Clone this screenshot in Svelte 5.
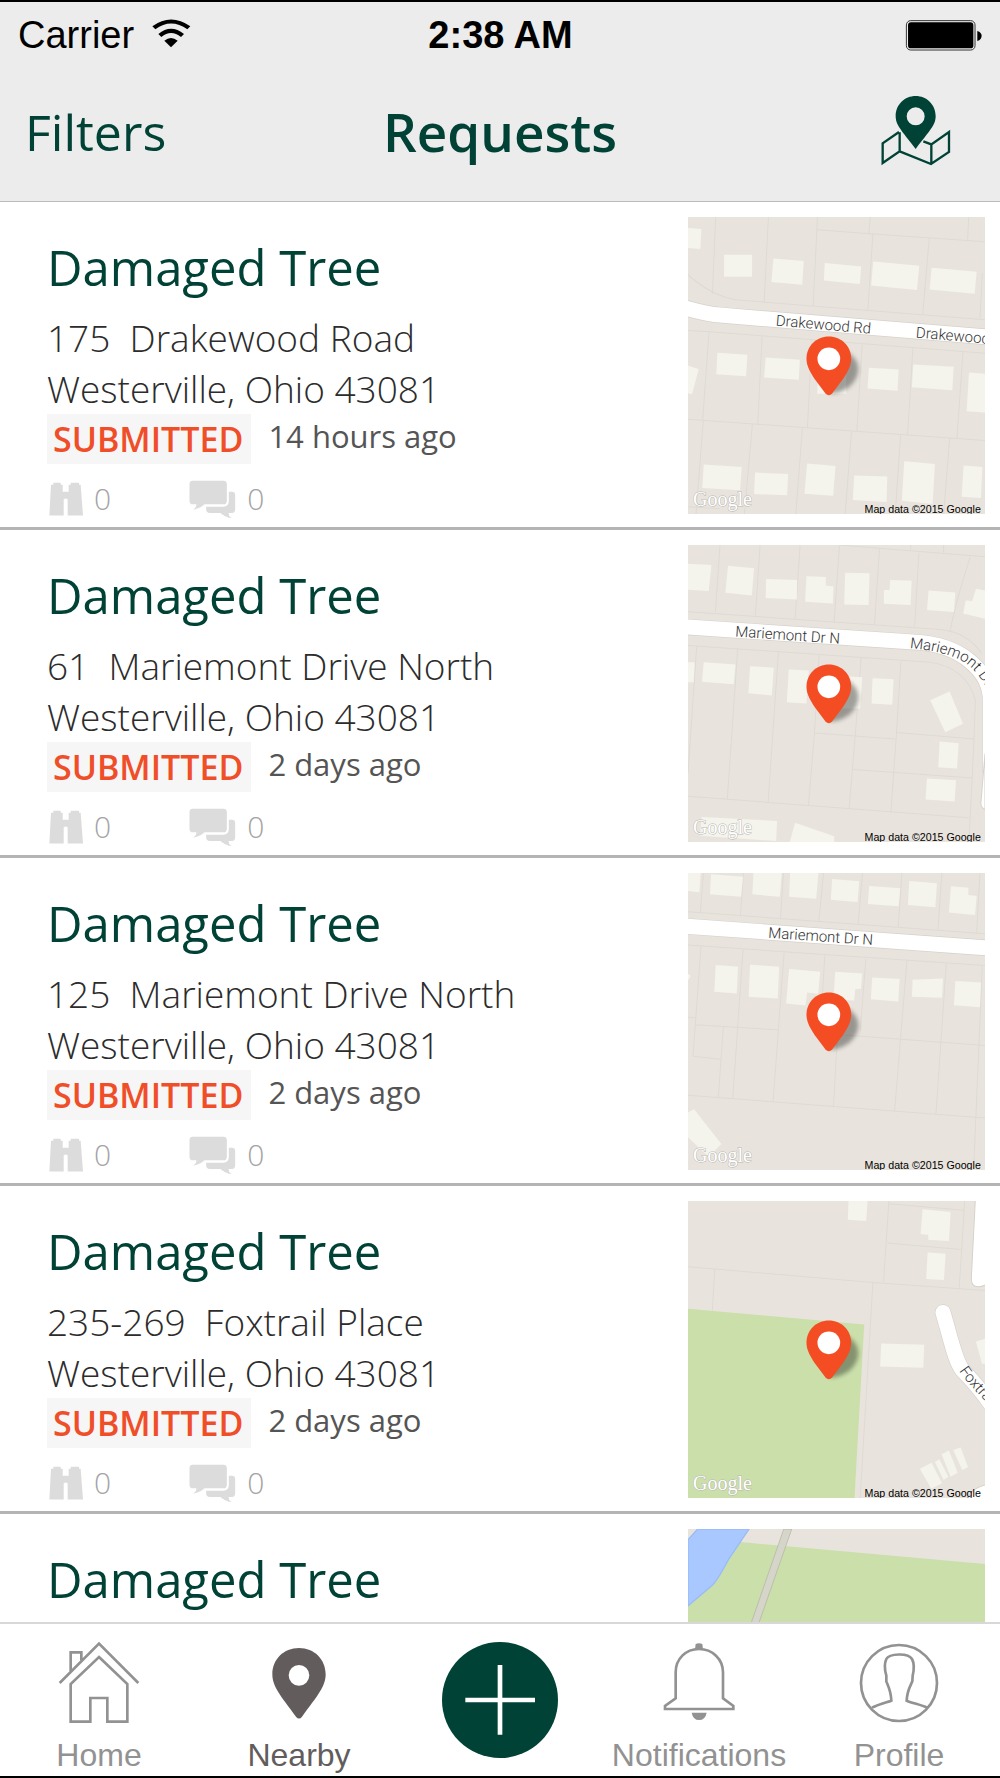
<script>
  const requests = [
    { street: '175\u00a0 Drakewood Road', city: 'Westerville, Ohio 43081', age: '14 hours ago', map: 'drakewood' },
    { street: '61\u00a0 Mariemont Drive North', city: 'Westerville, Ohio 43081', age: '2 days ago', map: 'mariemontEast' },
    { street: '125\u00a0 Mariemont Drive North', city: 'Westerville, Ohio 43081', age: '2 days ago', map: 'mariemontWest' },
    { street: '235-269\u00a0 Foxtrail Place', city: 'Westerville, Ohio 43081', age: '2 days ago', map: 'foxtrail' },
    { map: 'river' }
  ];
</script>

{#snippet drakewood()}
  <g transform="translate(-24 -22)">
    <path class="lot" d="M107 22L97 253M265 22L252 280M412 22L399 290M412 60L570 72L914 96M570 22L566 72L578 74L563 303M865 22L862 92M747 86L727 316M906 190L899 325M24 195Q90 255 165 270L914 330M24 362L90 366L914 430M87 366L68 630M246 380L233 642M395 390L382 653M546 402L530 663M698 414L682 675M848 426L830 686M24 628L914 692M70 630L48 912M217 643L193 912M367 653L347 912M514 664L495 912M661 675L645 912M808 686L790 912M24 890L120 896" />
    <path class="house" d="M24 55L64 58L61 118L24 115ZM132 135H216V201H132ZM280 146L371 154L366 225L274 217ZM434 160L543 170L539 223L431 212ZM579 155L717 168L710 241L573 227ZM754 174L889 186L883 252L748 239ZM112 429L202 435L198 499L109 493ZM257 443L359 450L356 510L252 503ZM414 490H498V552H411ZM566 474L655 479L652 543L562 536ZM699 464L820 471L816 541L695 532ZM866 488L914 492V608L859 604ZM24 467L56 478L36 553L24 550ZM71 764L185 771L180 841L67 834ZM225 788L324 792L321 856L222 852ZM381 761L466 768L459 857L373 851ZM522 797L621 800L619 876L518 870ZM672 754L764 762L757 882L665 872ZM850 767L906 771L902 864L844 860Z" />
    <path class="curb" d="M10 293Q85 314 120 316L930 382" />
    <path class="road" d="M10 293Q85 314 120 316L930 382" />
    <text class="street" x="286" y="347" transform="rotate(5 286 347)">Drakewood Rd</text>
    <text class="street" x="706" y="383" transform="rotate(5 706 383)">Drakewood Rd</text>
  </g>
{/snippet}

{#snippet mariemontEast()}
  <g transform="translate(-24 -15)">
    <path class="lot" d="M120 15L106 217M240 15L226 226M360 15L345 236M478 15L462 245M598 25L583 252M716 38L703 260M870 50Q825 190 809 275M476 15L914 50M691 15V28M790 15V38M24 215L780 268Q860 276 905 340M24 316L750 366Q860 385 885 480L880 620L866 905M50 318L24 700M173 325L142 775M295 335L264 786M417 345L403 578L385 795M543 350L525 588L507 802M662 365L648 590L632 815M403 578L644 596M648 577L882 596M520 688L876 713M24 768L866 832" />
    <path class="house" d="M24 71L94 75L86 153L24 149ZM144 77L222 85L215 166L136 158ZM258 117L351 120L350 178L257 174ZM379 109L437 111V136L460 139L458 190L375 185ZM495 98L568 100L565 195L492 193ZM630 120L694 122L691 195L611 191V150H628ZM745 151L825 157L821 216L740 210ZM887 146L914 151V236L849 220L856 181L876 183ZM24 366H44L41 426H24ZM71 366L166 373L161 432L66 425ZM210 378L281 383L275 466L205 459ZM326 388L386 391L379 490L320 486ZM490 408L546 411L540 505H480ZM577 414L640 417L636 494L574 490ZM750 480L808 454L848 551L795 576ZM778 604L835 609L830 685L774 681ZM740 715L827 720L823 784L736 778ZM65 830L291 842L288 902L60 886ZM345 847L462 888V905H329Z" />
    <path class="curb" d="M10 260L700 306C850 312 930 400 930 480V690" />
    <path class="road" d="M10 260L700 306C850 312 930 400 930 480V690" />
    <path class="road-edge" d="M914 640L902 785Q900 802 914 808Z" />
    <text class="street" x="165" y="289" transform="rotate(4 165 289)">Mariemont Dr N</text>
    <path id="mariemont-bend" d="M688 324C770 332 825 345 865 376C895 400 920 440 935 480" fill="none" />
    <text class="street"><textPath href="#mariemont-bend">Mariemont Dr</textPath></text>
  </g>
{/snippet}

{#snippet mariemontWest()}
  <g transform="translate(-24 -26)">
    <path class="lot" d="M70 26L61 145M190 26L181 155M310 26L301 163M430 26L416 172M547 26L534 178M665 26L654 187M785 26L773 195M899 26L889 205M24 142L914 208M24 242L914 303M63 245L39 575M189 255L158 702M312 264L279 710M434 272L425 420M557 284L540 500M680 290L643 740M798 298L767 748M906 303L880 914M24 458L47 459M47 481L292 496M130 486L115 697M40 575L122 584M472 510L914 543M472 510L460 724M24 692L914 760" />
    <path class="house" d="M24 26H62L58 84L24 80ZM93 30L189 37L183 97L90 90ZM220 26H305L299 97L217 90ZM330 26H415L408 103L327 97ZM456 44L537 51L532 113L452 106ZM567 65L660 72L655 126L563 119ZM687 50L770 57L765 129L683 122ZM812 66L864 70V92L889 95L884 152L806 144ZM107 302L174 307L170 387L103 382ZM210 301L297 307L293 402L206 397ZM327 314L420 322L414 388L381 384L376 423L318 417ZM465 322L546 327L542 373L525 374L522 408L460 405ZM576 339L658 344L654 411L572 404ZM697 346L788 342L785 400L695 397ZM825 350L902 354L899 428L821 422ZM24 328L32 335L24 348ZM42 734L124 838L86 876L24 818V744Z" />
    <path class="curb" d="M10 185L930 251" />
    <path class="road" d="M10 185L930 251" />
    <text class="street" x="264" y="220" transform="rotate(4 264 220)">Mariemont Dr N</text>
  </g>
{/snippet}

{#snippet foxtrail()}
  <g transform="translate(-24 -34)">
    <path class="lot" d="M24 231L578 278L914 302M104 239L97 362M626 34L610 276M626 42L850 62M622 160L842 179M853 34L837 294M578 278L540 924" />
    <path class="park" d="M24 357L552 404L523 924H24Z" />
    <path class="house" d="M505 34H562L558 94L503 90ZM727 59L811 67L806 154L744 150V135L721 133ZM742 188L796 192L791 271L738 268ZM603 461L732 465L729 534L600 530ZM887 455L914 447V522H905ZM719 836L754 818L785 880L753 896ZM764 816L777 808L804 860L790 870ZM784 793L806 782L832 848L811 860ZM819 780L841 773L863 831L846 840Z" />
    <path class="road-edge" d="M885 30L873 265Q872 291 894 291Q906 291 918 284V30Z" />
    <path class="road-edge" d="M918 884Q890 890 875 905L860 928H918Z" />
    <path class="curb" d="M788 368C810 440 825 520 850 545C880 575 905 605 940 655" />
    <path class="road" d="M788 368C810 440 825 520 850 545C880 575 905 605 940 655" />
    <path id="foxtrail-bend" d="M836 543C860 580 890 603 945 670" fill="none" />
    <text class="street"><textPath href="#foxtrail-bend">Foxtrail Pl</textPath></text>
  </g>
{/snippet}

{#snippet river()}
  <g transform="translate(-84 -120)">
    <path class="park" d="M84 150L250 160L974 225V1010H84Z" />
    <path class="water" d="M113 120H267L205 212Q170 278 155 290L84 350V152Z" />
    <path class="track" d="M371 120H395L290 420H267Z" />
  </g>
{/snippet}

{#snippet tile(name)}
  <svg class="map" viewBox="0 0 890 890" role="img" aria-label="Map of the request location">
    <rect class="land" width="890" height="890" />
    {#if name === 'drakewood'}{@render drakewood()}
    {:else if name === 'mariemontEast'}{@render mariemontEast()}
    {:else if name === 'mariemontWest'}{@render mariemontWest()}
    {:else if name === 'foxtrail'}{@render foxtrail()}
    {:else}{@render river()}{/if}
    {#if name !== 'river'}
      <path class="shadow" d="M470 402C512 420 518 458 502 486C488 510 466 524 428 530L422 520Z" />
      <path class="pin" d="M422 358C460 358 489 388 489 424C489 448 476 468 464 486L432 529Q422 540 412 529L380 486C368 468 355 448 355 424C355 388 384 358 422 358Z" />
      <circle class="pin-hole" cx="422" cy="425" r="34" />
      <text class="google" x="15" y="866">Google</text>
      <text class="credit" x="529" y="886">Map data ©2015 Google</text>
    {/if}
  </svg>
{/snippet}

<div class="screen">
  <header>
    <div class="status">
      <div class="carrier">
        <span>Carrier</span>
        <svg class="wifi" viewBox="457 50 120 90" aria-hidden="true">
          <path d="M461 75Q517 34 575 75L566 84Q517 49 470 84Z" />
          <path d="M479 98Q517 66 556 98L547 107Q517 83 488 107Z" />
          <path d="M497 118Q517 102 537 118L517 138Z" />
        </svg>
      </div>
      <span class="clock">2:38 AM</span>
      <svg class="battery" viewBox="1216 50 234 100" aria-hidden="true">
        <rect x="1219" y="55" width="208" height="89" rx="13" fill="none" stroke="#333" stroke-width="3" />
        <rect x="1224" y="60" width="198" height="79" rx="9" />
        <path d="M1434 86Q1447 90 1447 101Q1447 113 1434 117Z" />
      </svg>
    </div>
    <div class="bar">
      <button class="filters">Filters</button>
      <h1>Requests</h1>
      <button class="map-toggle" aria-label="Show map">
        <svg viewBox="1143 282 210 213" aria-hidden="true">
          <path fill="none" stroke="currentColor" stroke-width="7" d="M1197 393L1148 427V486L1199 451L1293 489L1347 453V393L1294 430L1270 421M1199 394V451M1294 430V489" />
          <path fill="#ececec" d="M1187 346C1181 360 1206 395 1247 451L1264 428L1215 370Z" />
          <path fill="currentColor" fill-rule="evenodd" d="M1247 285C1280 285 1307 311 1307 345C1307 373 1290 387 1247 444C1204 387 1187 373 1187 345C1187 311 1214 285 1247 285ZM1247 319A27 27 0 1 0 1247 373A27 27 0 1 0 1247 319Z" />
        </svg>
      </button>
    </div>
  </header>

  <main>
    <ul>
      {#each requests as request}
        <li>
          <div class="info">
            <h2>Damaged Tree</h2>
            {#if request.street}
              <p class="address">{request.street}<br />{request.city}</p>
              <div class="state">
                <span class="badge">SUBMITTED</span>
                <span class="age">{request.age}</span>
              </div>
              <div class="counts">
                <span class="count">
                  <svg class="binoculars" viewBox="148 814 102 101" aria-hidden="true">
                    <path d="M161 816H183V822H189V843H207V822H213V816H238V822H243L250 914H204V866Q198 860 192 866V914H149L154 822H161Z" />
                  </svg>
                  0
                </span>
                <span class="count">
                  <svg class="comments" viewBox="566 811 140 117" aria-hidden="true">
                    <path d="M577 813H669Q679 813 679 823V873Q679 884 669 884H612Q598 897 579 900Q588 893 588 884H577Q567 884 567 873V823Q567 813 577 813Z" />
                    <path d="M685 846H694Q704 846 704 856V899Q704 910 694 910H684Q684 919 693 926Q672 922 660 910H628Q617 910 617 899V891H670Q685 889 685 875Z" />
                  </svg>
                  0
                </span>
              </div>
            {/if}
          </div>
          {@render tile(request.map)}
        </li>
      {/each}
    </ul>
  </main>

  <nav>
    <a href="#home">
      <svg viewBox="167 120 264 264" aria-hidden="true">
        <path class="line" d="M181 249L299 131L417 249M214 214V157H246V181M299 171L384 252V365H324V294H273V365H214V252Z" />
      </svg>
      Home
    </a>
    <a href="#nearby" class="active" aria-current="page">
      <svg viewBox="765 120 264 264" aria-hidden="true">
        <path fill="currentColor" fill-rule="evenodd" d="M897 144C943 144 977 178 977 223C977 258 954 286 906 350Q897 361 888 350C840 286 817 258 817 223C817 178 851 144 897 144ZM897 195A31 31 0 1 0 897 257A31 31 0 1 0 897 195Z" />
      </svg>
      Nearby
    </a>
    <button class="add" aria-label="New request">
      <svg viewBox="126 126 348 348" aria-hidden="true">
        <circle cx="300" cy="300" r="174" fill="#004236" />
        <path d="M300 195V404M196 300H405" stroke="#fff" stroke-width="14" />
      </svg>
    </button>
    <a href="#notifications">
      <svg viewBox="-10 450 264 264" aria-hidden="true">
        <path class="line" d="M52 625V547C52 507 82 477 122 477C162 477 194 507 194 547V625L225 648V657H20V648Z" />
        <path fill="currentColor" d="M110 478L112 462Q122 457 132 462L134 478ZM100 668H145Q141 690 122 690Q104 690 100 668Z" />
      </svg>
      Notifications
    </a>
    <a href="#profile">
      <svg viewBox="585 450 264 264" aria-hidden="true">
        <circle class="line" cx="717" cy="579" r="114" />
        <path class="line" d="M636 653C655 643 680 637 694 632C693 602 683 585 679 574V557C674 540 673 520 679 507C688 490 745 488 756 507C763 520 762 540 758 557L757 574C751 588 741 602 740 632C760 640 784 645 801 653" />
      </svg>
      Profile
    </a>
  </nav>
</div>

<style>
  :global(body) {
    margin: 0;
  }
  .screen {
    box-sizing: border-box;
    height: 100vh;
    display: flex;
    flex-direction: column;
    overflow: hidden;
    border-top: 2px solid #000;
    border-bottom: 2px solid #000;
    background: #fff;
    font-family: 'Open Sans', 'Noto Sans', sans-serif;
  }
  h1, h2, p, ul {
    margin: 0;
    padding: 0;
    font-weight: 400;
  }
  button {
    border: 0;
    padding: 0;
    background: none;
    font: inherit;
    color: inherit;
    cursor: pointer;
  }
  svg {
    display: block;
    flex: none;
  }
  header {
    flex: none;
    background: #ececec;
    border-bottom: 1px solid #bbb;
    color: #004236;
  }
  .status {
    display: grid;
    grid-template-columns: 1fr auto 1fr;
    align-items: center;
    padding: 10px 17px 0 18px;
    font: 38px/46px 'Liberation Sans', Arial, sans-serif;
    color: #000;
  }
  .carrier {
    display: flex;
    align-items: center;
    gap: 17px;
  }
  .wifi {
    width: 40px;
    height: 30px;
    margin-bottom: 4px;
  }
  .clock {
    font-weight: 700;
  }
  .battery {
    width: 78px;
    height: 33px;
    justify-self: end;
  }
  .bar {
    display: grid;
    grid-template-columns: 1fr auto 1fr;
    align-items: center;
    padding: 36px 0 31px;
  }
  .filters {
    justify-self: start;
    padding-left: 25px;
    font-size: 50px;
    line-height: 76px;
  }
  h1 {
    font-size: 53px;
    font-weight: 600;
    line-height: 76px;
  }
  .map-toggle {
    justify-self: end;
    padding: 0 49px 4px 0;
  }
  .map-toggle svg {
    width: 70px;
    height: 71px;
  }
  main {
    flex: 1;
    min-height: 0;
    overflow: hidden;
  }
  ul {
    list-style: none;
  }
  li {
    display: flex;
    justify-content: space-between;
    align-items: flex-start;
    padding: 15px 15px 7px 47px;
    border-bottom: 3px solid #b4b4b4;
  }
  .info {
    padding-top: 16px;
  }
  h2 {
    font-size: 49px;
    line-height: 68px;
    color: #004236;
  }
  .address {
    margin-top: 11px;
    font-size: 37px;
    font-weight: 300;
    line-height: 51px;
    color: #2c2c2c;
  }
  .state {
    display: flex;
    align-items: flex-start;
    gap: 17px;
  }
  .badge {
    padding: 0 8px 0 6px;
    background: #f6f6f6;
    color: #f04e28;
    font-size: 34px;
    font-weight: 600;
    line-height: 50px;
  }
  .age {
    font-size: 31px;
    line-height: 44px;
    color: #555;
  }
  .counts {
    display: flex;
    align-items: center;
    gap: 76px;
    margin-top: 14px;
    font-size: 30px;
    font-weight: 300;
    line-height: 42px;
    color: #a4a4a4;
  }
  .count {
    display: flex;
    align-items: center;
    gap: 11px;
    padding-left: 2px;
  }
  .count svg {
    fill: #dcdcdc;
  }
  .binoculars {
    width: 34px;
    height: 34px;
  }
  .comments {
    width: 47px;
    height: 39px;
  }
  .map {
    width: 297px;
    height: 297px;
  }
  .land {
    fill: #e8e4dd;
  }
  .lot {
    fill: none;
    stroke: #dedad4;
    stroke-width: 3;
  }
  .house {
    fill: #f4f4ec;
  }
  .curb {
    fill: none;
    stroke: #d6d2cb;
    stroke-width: 49;
    stroke-linecap: round;
  }
  .road {
    fill: none;
    stroke: #fff;
    stroke-width: 45;
    stroke-linecap: round;
  }
  .road-edge {
    fill: #fff;
    stroke: #d6d2cb;
    stroke-width: 3;
  }
  .park {
    fill: #cadfaa;
  }
  .water {
    fill: #a8c8ff;
    stroke: #99bbf8;
    stroke-width: 4;
  }
  .track {
    fill: #d6d5ca;
    stroke: #b3b1a5;
    stroke-width: 2;
  }
  .street {
    font-family: Roboto, sans-serif;
    font-size: 45px;
    font-weight: 300;
    fill: #333;
  }
  .shadow {
    fill: #000;
    opacity: 0.34;
    filter: blur(7px);
  }
  .pin {
    fill: #f44d24;
  }
  .pin-hole {
    fill: #fff;
  }
  .google {
    font-family: 'Liberation Serif', serif;
    font-size: 60px;
    fill: #fff;
    stroke: #b9b6b0;
    stroke-width: 3;
    paint-order: stroke;
  }
  .credit {
    font-family: 'Liberation Sans', Arial, sans-serif;
    font-size: 32px;
    fill: #000;
  }
  nav {
    flex: none;
    display: grid;
    grid-template-columns: repeat(5, 1fr);
    padding: 16px 0 2px;
    border-top: 2px solid #d8d8d8;
    background: #fff;
    color: #929292;
    font: 32px/38px 'Liberation Sans', Arial, sans-serif;
  }
  nav a {
    display: flex;
    flex-direction: column;
    align-items: center;
    gap: 8px;
    padding-right: 2px;
    color: inherit;
    text-decoration: none;
  }
  nav a svg {
    width: 88px;
    height: 88px;
  }
  nav .active {
    color: #625d5c;
  }
  .line {
    fill: none;
    stroke: currentColor;
    stroke-width: 8;
  }
  .add {
    justify-self: center;
    align-self: start;
    padding-top: 2px;
  }
  .add svg {
    width: 116px;
    height: 116px;
  }
</style>
